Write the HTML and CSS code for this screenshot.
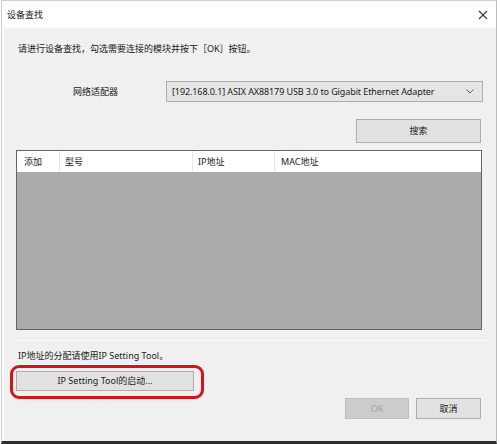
FILE: index.html
```html
<!DOCTYPE html>
<html lang="zh-CN">
<head>
<meta charset="utf-8">
<title>设备查找</title>
<link rel="stylesheet" href="styles.css">
</head>
<body>
<div class="window">
  <div class="titlebar">
    <span class="title">设备查找</span>
    <svg class="close" width="10" height="10" viewBox="0 0 10 10"><path d="M1 1 L9 9 M9 1 L1 9" stroke="#3a3a3a" stroke-width="1.1" fill="none"/></svg>
  </div>
  <div class="panel">
    <p class="intro">请进行设备查找，勾选需要连接的模块并按下［OK］按钮。</p>
    <div class="adapter-row">
      <span class="label">网络适配器</span>
      <div class="select">
        <span class="select-text">[192.168.0.1] ASIX AX88179 USB 3.0 to Gigabit Ethernet Adapter</span>
        <svg class="chevron" width="8" height="5" viewBox="0 0 8 5"><path d="M0.5 0.5 L4 4 L7.5 0.5" stroke="#606060" stroke-width="1" fill="none"/></svg>
      </div>
    </div>
    <div class="search-row">
      <button class="btn search">搜索</button>
    </div>
    <div class="table">
      <div class="thead">
        <div class="th c1">添加</div>
        <div class="th c2">型号</div>
        <div class="th c3">IP地址</div>
        <div class="th c4">MAC地址</div>
      </div>
      <div class="tbody"></div>
    </div>
    <div class="sep"></div>
    <p class="hint">IP地址的分配请使用IP Setting Tool。</p>
    <div class="ip-wrap">
      <button class="btn ip">IP Setting Tool的启动...</button>
    </div>
    <div class="footer">
      <button class="btn ok" disabled>OK</button>
      <button class="btn cancel">取消</button>
    </div>
  </div>
</div>
</body>
</html>
```
FILE: styles.css
```css
* { box-sizing: border-box; }
html, body { margin: 0; padding: 0; background: #ffffff; }
body {
  font-family: "Noto Sans", "Noto Sans CJK SC", sans-serif;
  font-size: 9px;
  color: #1a1a1a;
  width: 500px;
  height: 444px;
  overflow: hidden;
}
.window {
  margin-left: 1px;
  width: 496px;
  height: 444px;
  border-left: 1px solid #cfcfcf;
  border-right: 1px solid #bcbcbc;
  border-top: 1px solid #cfcfcf;
  border-bottom: 3px solid #2e2e2e;
  display: flex;
  flex-direction: column;
  background: #ffffff;
}
.titlebar {
  height: 27px;
  display: flex;
  align-items: center;
  justify-content: space-between;
  padding: 0 8px 0 5px;
  flex: none;
}
.title { line-height: 12px; }
.close { display: block; }
.panel {
  flex: 1;
  margin-left: 2px;
  background: #f0f0f0;
  padding: 0 14px 0 12px;
  display: flex;
  flex-direction: column;
}
.intro {
  margin: 15px 0 0 2px;
  line-height: 12px;
}
.adapter-row {
  margin-top: 26px;
  display: flex;
  align-items: center;
  height: 21px;
}
.label {
  margin-left: 57px;
  width: 93px;
  line-height: 12px;
}
.select {
  flex: none;
  width: 317px;
  height: 21px;
  margin-right: -2px;
  background: #e5e5e5;
  border: 1px solid #adadad;
  display: flex;
  align-items: center;
  justify-content: space-between;
  padding: 0 8px 0 5px;
}
.select-text { line-height: 12px; white-space: nowrap; letter-spacing: -0.1px; }
.chevron { display: block; }
.search-row {
  margin-top: 17px;
  display: flex;
  justify-content: flex-end;
  padding-right: 1px;
}
.btn {
  font-family: "Noto Sans", "Noto Sans CJK SC", sans-serif;
  font-size: 9px;
  color: #1a1a1a;
  background: #e1e1e1;
  border: 1px solid #adadad;
  padding: 0;
  margin: 0;
  line-height: 12px;
}
.search { width: 125px; height: 24px; }
.table {
  margin-top: 7px;
  height: 180px;
  border: 1px solid #646464;
  display: flex;
  flex-direction: column;
  background: #ababab;
}
.thead {
  height: 21px;
  background: #ffffff;
  display: grid;
  grid-template-columns: 43px 133px 82px 1fr;
  flex: none;
}
.th {
  display: flex;
  align-items: center;
  padding-left: 5px;
  border-right: 1px solid #e6e6e6;
  line-height: 12px;
}
.th.c1 { padding-left: 7px; }
.th.c4 { border-right: none; padding-left: 6px; }
.tbody { flex: 1; background: #ababab; }
.sep {
  margin: 10px -7px 0 0;
  height: 1px;
  background: #fbfbfb;
}
.hint {
  margin: 9px 0 0 2px;
  line-height: 12px;
}
.ip-wrap {
  margin-top: 9px;
  position: relative;
  width: 178px;
}
.ip-wrap::after {
  content: "";
  position: absolute;
  left: -6px;
  top: -6px;
  right: -10px;
  bottom: -8px;
  border: 3px solid #d4141c;
  border-radius: 9px;
  pointer-events: none;
}
.ip { width: 178px; height: 20px; display: block; }
.footer {
  margin-top: 7px;
  display: flex;
  justify-content: flex-end;
  gap: 7px;
  padding-right: 1px;
}
.ok {
  width: 64px;
  height: 21px;
  background: #cccccc;
  border-color: #bfbfbf;
  color: #a3a3a3;
}
.cancel { width: 65px; height: 21px; }
```
